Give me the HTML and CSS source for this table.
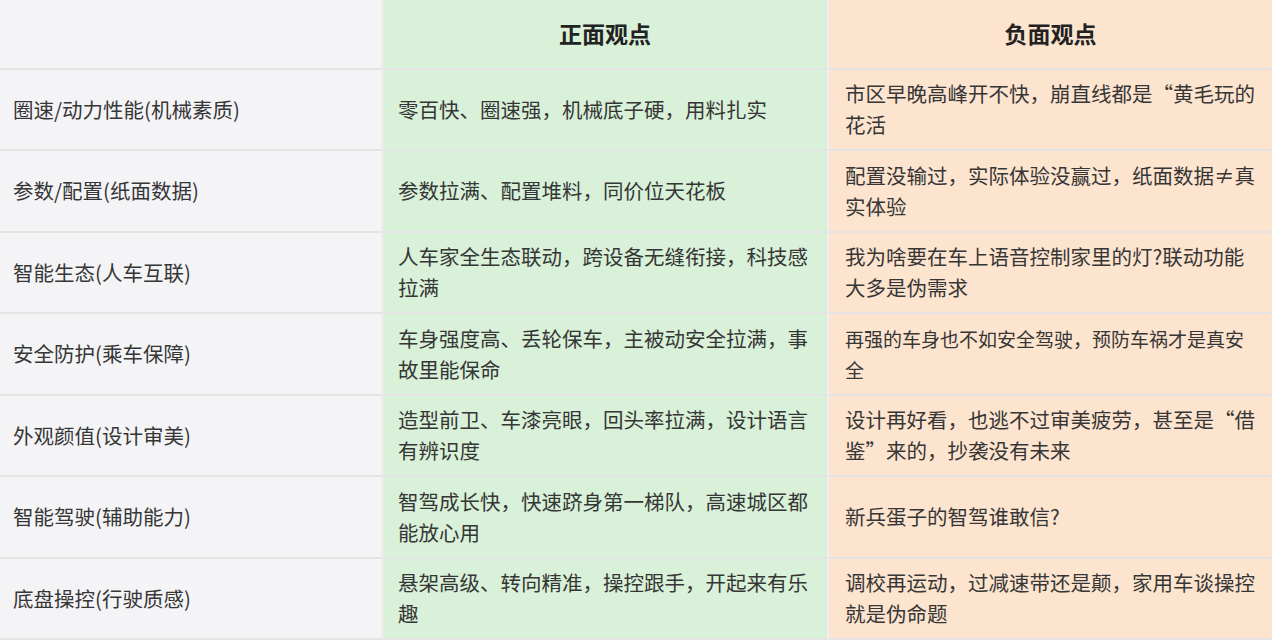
FILE: index.html
```html
<!DOCTYPE html>
<html lang="zh-CN">
<head>
<meta charset="utf-8">
<title>观点对比</title>
<link rel="stylesheet" href="styles.css">
</head>
<body>
<div class="table">
  <div class="cell head c1"></div>
  <div class="cell head c2">正面观点</div>
  <div class="cell head c3">负面观点</div>

  <div class="cell c1">圈速/动力性能(机械素质)</div>
  <div class="cell c2">零百快、圈速强，机械底子硬，用料扎实</div>
  <div class="cell c3">市区早晚高峰开不快，崩直线都是“黄毛玩的花活</div>

  <div class="cell c1">参数/配置(纸面数据)</div>
  <div class="cell c2">参数拉满、配置堆料，同价位天花板</div>
  <div class="cell c3">配置没输过，实际体验没赢过，纸面数据≠真实体验</div>

  <div class="cell c1">智能生态(人车互联)</div>
  <div class="cell c2">人车家全生态联动，跨设备无缝衔接，科技感拉满</div>
  <div class="cell c3">我为啥要在车上语音控制家里的灯?联动功能大多是伪需求</div>

  <div class="cell c1">安全防护(乘车保障)</div>
  <div class="cell c2">车身强度高、丢轮保车，主被动安全拉满，事故里能保命</div>
  <div class="cell c3 tight">再强的车身也不如安全驾驶，预防车祸才是真安全</div>

  <div class="cell c1">外观颜值(设计审美)</div>
  <div class="cell c2">造型前卫、车漆亮眼，回头率拉满，设计语言有辨识度</div>
  <div class="cell c3">设计再好看，也逃不过审美疲劳，甚至是“借鉴”来的，抄袭没有未来</div>

  <div class="cell c1">智能驾驶(辅助能力)</div>
  <div class="cell c2">智驾成长快，快速跻身第一梯队，高速城区都能放心用</div>
  <div class="cell c3">新兵蛋子的智驾谁敢信?</div>

  <div class="cell c1">底盘操控(行驶质感)</div>
  <div class="cell c2">悬架高级、转向精准，操控跟手，开起来有乐趣</div>
  <div class="cell c3">调校再运动，过减速带还是颠，家用车谈操控就是伪命题</div>
</div>
</body>
</html>
```

FILE: styles.css
```css
html, body {
  margin: 0;
  padding: 0;
  background: #ffffff;
}

body {
  font-family: "Noto Sans CJK SC", "Noto Sans", sans-serif;
  color: #363636;
  width: 1272px;
  height: 640px;
  overflow: hidden;
}

.table {
  display: grid;
  grid-template-columns: 383px 446px 443px;
  grid-template-rows: 69.5px repeat(7, 81.5px);
}

.cell {
  box-sizing: border-box;
  display: flex;
  align-items: center;
  font-size: 20.5px;
  line-height: 31px;
  padding: 0 14px 0 15px;
  border-bottom: 2px solid #e4e4e5;
  border-right: 2px solid #eeeeee;
}

.c1 {
  background: #f4f4f6;
  padding-left: 13px;
}

.c2 {
  background: #d8f1d8;
}

.c3 {
  background: #fde4cf;
  border-right: none;
  padding-left: 16px;
}

.head {
  justify-content: center;
  font-size: 23px;
  font-weight: 700;
  color: #222222;
  padding: 0;
}

.tight {
  font-size: 19px;
}
```
